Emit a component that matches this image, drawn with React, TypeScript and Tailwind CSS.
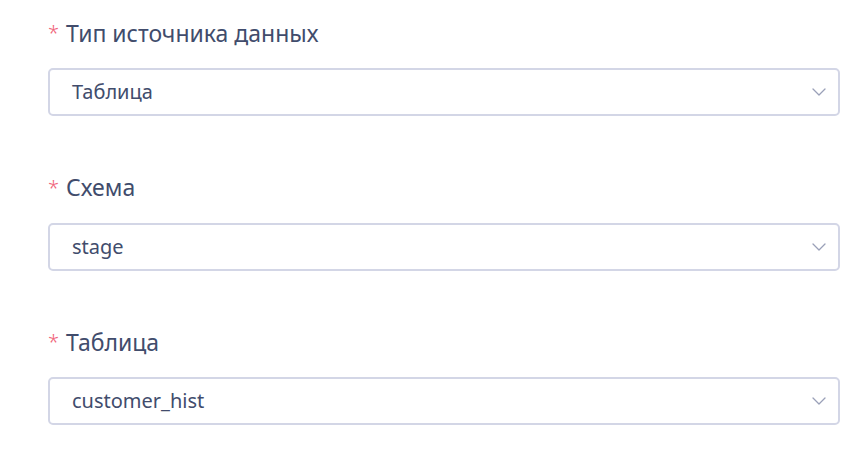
import React from "react";

const fields = [
  { label: "Тип источника данных", value: "Таблица" },
  { label: "Схема", value: "stage" },
  { label: "Таблица", value: "customer_hist" },
];

function Chevron() {
  return (
    <svg width="14" height="8" viewBox="0 0 14 8" fill="none" className="shrink-0">
      <path d="M1 1 L7 7 L13 1" stroke="#9aa0b8" strokeWidth="1.3" strokeLinecap="round" strokeLinejoin="round" />
    </svg>
  );
}

export default function App() {
  return (
    <div
      className="w-[865px] h-[471px] bg-white pl-[48px] pr-[25px] pt-[18px]"
      style={{ fontFamily: '"Noto Sans", "Open Sans", sans-serif' }}
    >
      <div className="flex flex-col gap-[56.5px]">
        {fields.map((f) => (
          <div key={f.label} className="flex flex-col">
            <div className="flex items-center h-[30px] text-[23px] text-[#414c6c]">
              <span className="text-[#f0637a] text-[20px] font-light mr-[7px] leading-none">*</span>
              <span className="leading-none">{f.label}</span>
            </div>
            <div className="mt-[20px] h-[48px] rounded-[5px] border-2 border-[#d3d6e6] flex items-center justify-between pl-[22px] pr-[12px]">
              <span className="text-[20px] text-[#414c6c]">{f.value}</span>
              <Chevron />
            </div>
          </div>
        ))}
      </div>
    </div>
  );
}
